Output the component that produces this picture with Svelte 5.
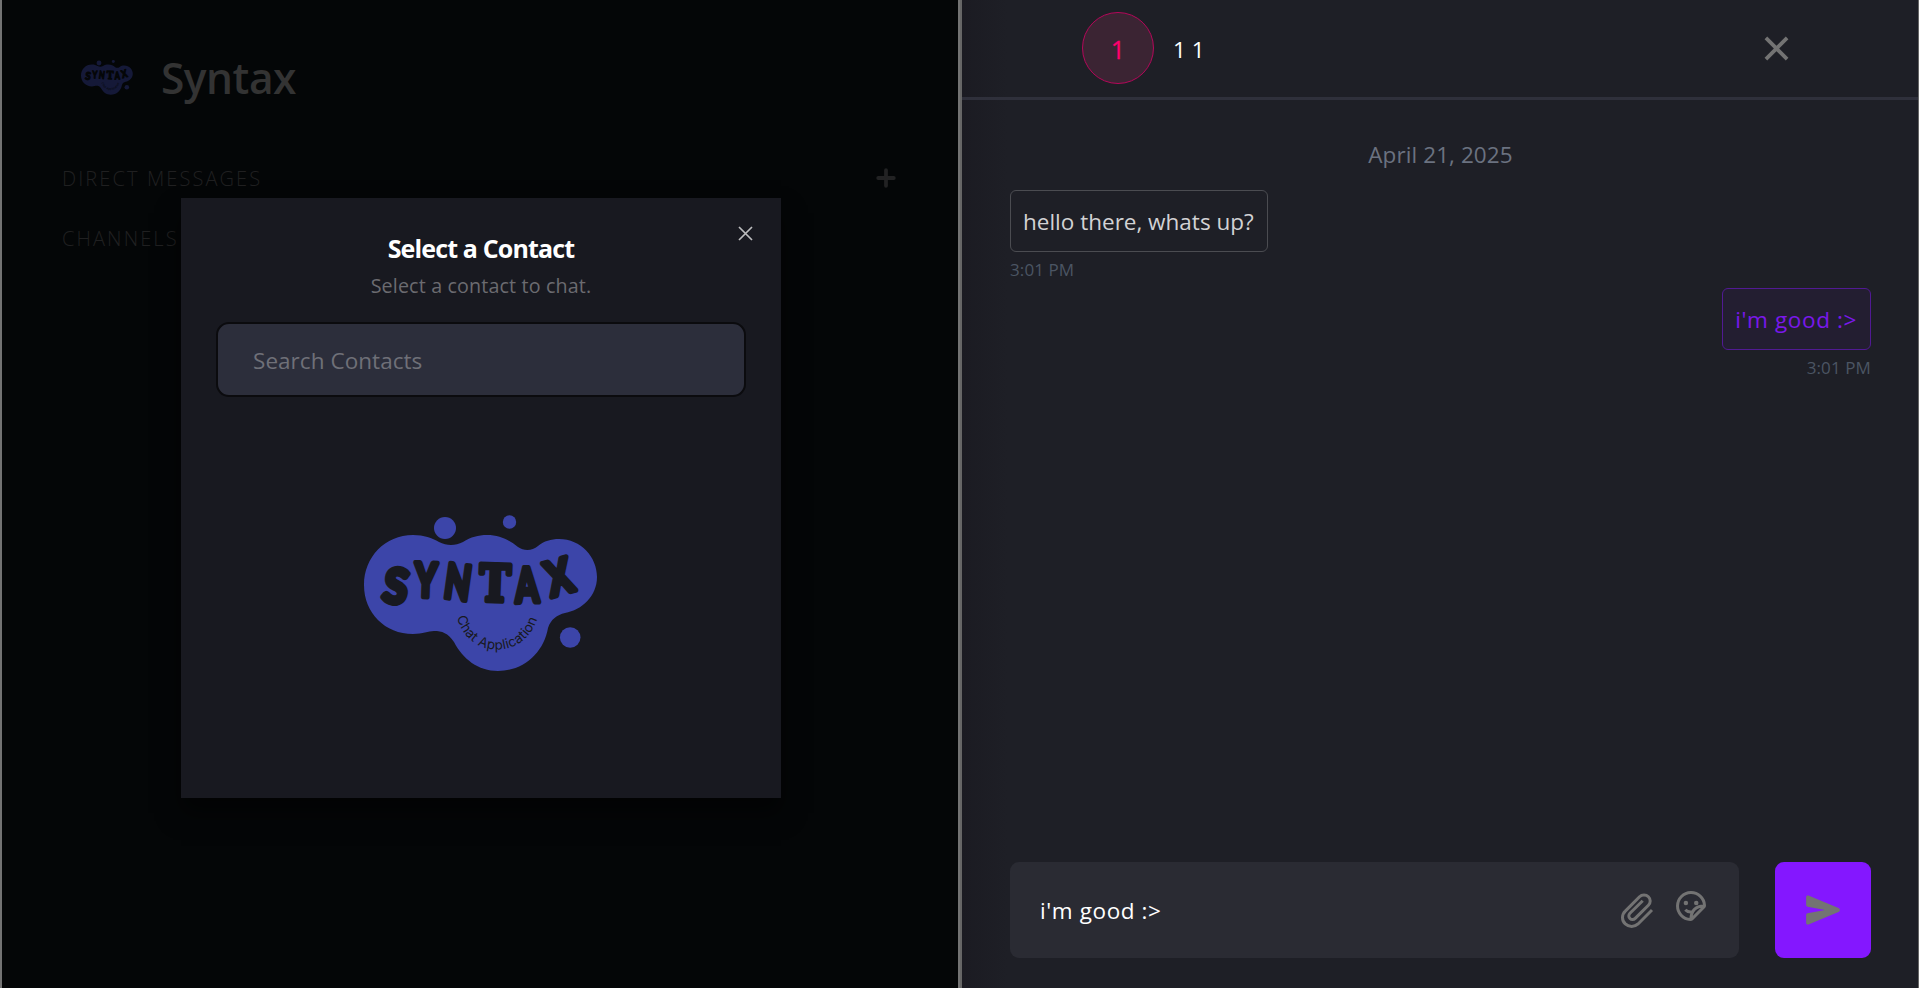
<script>
  const logoLetters = [
    { c: 'S', x: 56, y: 87, r: 10, s: 48, w: 0.92, f: 'Lato' },
    { c: 'Y', x: 86, y: 81, r: 2, s: 47, w: 0.72, f: 'Lato' },
    { c: 'N', x: 118, y: 83, r: 8, s: 48, w: 0.7, f: 'Lato' },
    { c: 'T', x: 155, y: 84, r: 2, s: 50, w: 0.83, f: 'DejaVu Serif' },
    { c: 'A', x: 187, y: 86, r: -2, s: 48, w: 0.7, f: 'Lato' },
    { c: 'X', x: 219, y: 78, r: -16, s: 48, w: 0.8, f: 'Lato' },
  ]
  const messages = [
    { text: "hello there, whats up?", time: '3:01 PM', mine: false },
    { text: "i'm good :>", time: '3:01 PM', mine: true },
  ]
  let search = $state('')
  let draft = $state("i'm good :>")
</script>

{#snippet logo(id, ink)}
  <svg class="logo" viewBox="24 16 234 157" aria-hidden="true">
    <g fill="#3c45a9">
      <circle cx="105" cy="29" r="11" />
      <circle cx="169.500" cy="23" r="6.7" />
      <circle cx="230.200" cy="138.500" r="10.300" />
      <path d="M73 36C84 36 92 39 99 43C107 47 115 47 123 43C131 38 138 36 147 36C160 36 169 41 178 48C184 52 192 52 198 47C204 42 211 40 219 40C241 40 257 58 257 78C257 97 242 111 225 114C217 116 211 120 208 129C204 153 184 172 158 172C138 172 123 160 114 143C108 134 102 132 94 132C88 132 83 135 73 135C45 135 24 114 24 86C24 58 45 36 73 36Z" />
    </g>
    <g class="word" fill={ink} stroke={ink}>
      {#each logoLetters as l}
        <text transform="translate({l.x} {l.y}) rotate({l.r}) scale({l.w} 1)" y={l.s * 0.36} font-size={l.s} font-family={l.f} text-anchor="middle">{l.c}</text>
      {/each}
    </g>
    <path id={id} d="M117 118C127 161 191 165 200 109" fill="none" />
    <text class="tagline" fill={ink}><textPath href="#{id}">Chat Application</textPath></text>
  </svg>
{/snippet}

<div class="app">
  <section class="contacts">
    <header class="brand">
      {@render logo('arc-small', '#050608')}
      <h1>Syntax</h1>
    </header>
    <div class="group">
      <h2>DIRECT MESSAGES</h2>
      <svg class="plus" viewBox="0 0 20 20"><path d="M10 2.200V17.800M2.200 10H17.800" stroke="#222223" stroke-width="3.800" stroke-linecap="round" /></svg>
    </div>
    <div class="group"><h2>CHANNELS</h2></div>

    <div class="dialog" role="dialog">
      <button class="dismiss" aria-label="Close">
        <svg viewBox="0 0 15 15"><path d="M1 1L14 14M14 1L1 14" stroke="#bcbcbe" stroke-width="1.700" fill="none" /></svg>
      </button>
      <h3>Select a Contact</h3>
      <p>Select a contact to chat.</p>
      <input class="search" placeholder="Search Contacts" bind:value={search} />
      <div class="art">{@render logo('arc-large', '#181920')}</div>
    </div>
  </section>

  <section class="chat">
    <header class="bar">
      <div class="person">
        <div class="avatar">1</div>
        <span>1 1</span>
      </div>
      <svg class="close" viewBox="0 0 24 24" fill="#737373"><path d="M11.9997 10.5865L16.9495 5.63672L18.3637 7.05093L13.4139 12.0007L18.3637 16.9504L16.9495 18.3646L11.9997 13.4149L7.04996 18.3646L5.63574 16.9504L10.5855 12.0007L5.63574 7.05093L7.04996 5.63672L11.9997 10.5865Z" /></svg>
    </header>
    <main>
      <div class="date">April 21, 2025</div>
      {#each messages as m}
        <div class="message" class:mine={m.mine}>
          <div class="bubble">{m.text}</div>
          <time>{m.time}</time>
        </div>
      {/each}
    </main>
    <footer>
      <div class="composer">
        <input bind:value={draft} />
        <svg class="clip" viewBox="0 0 24 24" fill="none" stroke="#737373" stroke-width="2"><path d="M22 12L12.700 21.300C10.400 23.500 6.500 23.500 4.200 21.300C1.700 19 1.700 15 4.200 12.700L13.700 3.200C15.300 1.600 18 1.600 19.600 3.200C21.200 4.800 21.200 7.200 19.600 8.800L10.800 17.600C9.800 18.600 8.200 18.600 7.300 17.600C6.300 16.700 6.300 15.200 7.300 14.200L15.800 5.800" /></svg>
        <svg class="sticker" viewBox="0 0 24 24" fill="none" stroke="#737373" stroke-width="2"><path d="M21 11.500A9 9 0 1 0 11.500 21C12 21 12.400 20.900 12.700 20.600L20.600 12.700C20.900 12.400 21 12 21 11.500ZM12 20.800C12 15.500 14.500 12.200 20.800 12M8.200 14.500C9.300 15.700 10.700 16.200 12.700 15.900" /><circle cx="8.600" cy="10" r="1.500" fill="#737373" stroke="none" /><circle cx="15.500" cy="10" r="1.500" fill="#737373" stroke="none" /></svg>
      </div>
      <button class="send" aria-label="Send">
        <svg viewBox="0 0 512 512" fill="#737373"><path d="M476.59 227.05l-.16-.07L49.35 49.84A23.56 23.56 0 0027.14 52 24.65 24.65 0 0016 72.59v113.29a24 24 0 0019.52 23.57l232.93 43.07a4 4 0 010 7.86L35.53 303.45A24 24 0 0016 327v113.31A23.57 23.57 0 0026.59 460a23.94 23.94 0 0013.22 4 24.55 24.55 0 009.52-1.93L476.4 285.94l.19-.09a32 32 0 000-58.8z" /></svg>
      </button>
    </footer>
  </section>
</div>

<style>
  :global(body) { margin: 0; background: #1c1d25; }
  * { box-sizing: border-box; }
  h1, h2, h3, p { margin: 0; }
  button { border: 0; padding: 0; background: none; }
  input { border: 0; outline: 0; font: inherit; color: inherit; letter-spacing: inherit; }
  svg { display: block; flex: none; }
  .app { display: flex; width: 100%; height: 988px; overflow: hidden; font-family: "Open Sans", "Noto Sans", sans-serif; font-size: 22.500px; letter-spacing: 0; color: #fff; }

  .contacts { position: relative; width: 960px; flex: none; border-left: 2px solid #737373; border-right: 2px solid #737373; background: #040607; }
  .brand { display: flex; align-items: center; gap: 28px; height: 108px; margin-top: 24px; padding-left: 79px; }
  .brand .logo { width: 52px; height: 35px; opacity: 0.300; margin-top: -1px; }
  h1 { font-size: 42.500px; line-height: 60px; font-weight: 600; letter-spacing: -0.500px; color: #333; }
  .group { display: flex; justify-content: space-between; align-items: center; height: 60px; padding: 0 60px; }
  .brand + .group { margin-top: 16px; }
  h2 { padding-top: 1px; font-size: 20px; line-height: 30px; font-weight: 300; letter-spacing: 2.100px; color: #202021; }
  .plus { width: 20px; height: 20px; margin-right: 2px; margin-top: -1px; }

  .dialog { position: absolute; left: 179px; top: 198px; width: 600px; height: 600px; padding: 36px 35px; display: flex; flex-direction: column; align-items: center; background: #181920; box-shadow: 0 15px 22px rgba(0, 0, 0, 0.500); }
  .dismiss { position: absolute; right: 28px; top: 28px; width: 15px; height: 15px; }
  h3 { font-size: 25px; line-height: 28px; font-weight: 700; letter-spacing: -0.850px; }
  p { margin-top: 9px; font-size: 19.700px; line-height: 30px; letter-spacing: 0.150px; color: #6b6b70; }
  .search { width: 530px; height: 75px; margin-top: 21px; padding: 2px 34px 0 35px; border: 2px solid #0b0b0e; border-radius: 13px; background: #2c2e3b; }
  .search::placeholder { color: #6f7078; opacity: 1; letter-spacing: 0.050px; }
  .art { margin-top: 118px; }
  .art .logo { width: 234px; height: 157px; }
  .word { font-weight: 900; stroke-width: 5; stroke-linejoin: round; letter-spacing: 0; }
  .tagline { font-family: "Inter", sans-serif; font-size: 13.500px; letter-spacing: 0.300px; }

  .chat { flex: 1; min-width: 0; display: flex; flex-direction: column; border-left: 2px solid #666; border-right: 1px solid #666; background: linear-gradient(90deg, #1b1b22, #1e1f26 45px); }
  .bar { display: flex; align-items: center; justify-content: space-between; height: 100px; padding: 0 119px 1px 120px; border-bottom: 3px solid #2f303b; }
  .person { display: flex; align-items: center; gap: 19px; }
  .person span { padding-top: 2px; }
  .avatar { width: 72px; height: 72px; display: flex; align-items: center; justify-content: center; border: 1.500px solid #b5075a; border-radius: 50%; background: #3b2433; color: #ff006e; font-size: 25px; padding-top: 1px; -webkit-text-stroke: 0.300px #ff006e; }
  .close { width: 45px; height: 45px; }
  main { flex: 1; padding: 37px 47px 0 48px; }
  .date { height: 36px; line-height: 36px; text-align: center; letter-spacing: 0.080px; color: #6b7280; }
  .message { display: flex; flex-direction: column; align-items: flex-start; height: 98px; }
  .date + .message { margin-top: 17px; }
  .bubble { height: 62px; padding: 2px 13px 0 12px; line-height: 58px; border: 1px solid #4b4c51; border-radius: 6px; color: #d2d2d4; white-space: nowrap; }
  time { margin-top: 4px; font-size: 17px; line-height: 27px; letter-spacing: 0.100px; color: #4b5563; }
  .mine { align-items: flex-end; }
  .mine .bubble { color: #7a18ea; border-color: #511a93; background: #231e31; letter-spacing: 0.620px; }
  footer { display: flex; gap: 36px; height: 126px; padding: 0 47px 0 48px; }
  .composer { flex: 1; display: flex; height: 96px; border-radius: 9px; background: #2a2b33; }
  .composer input { flex: 1; min-width: 0; padding: 1px 30px 0; background: none; letter-spacing: 0.600px; }
  .clip { width: 36px; height: 36px; margin: 30px 18px 0 0; }
  .sticker { width: 36px; height: 36px; margin: 26px 30px 0 0; }
  .send { width: 96px; height: 96px; display: flex; align-items: center; justify-content: center; border-radius: 9px; background: #8417ff; }
  .send svg { width: 36px; height: 36px; }
</style>
